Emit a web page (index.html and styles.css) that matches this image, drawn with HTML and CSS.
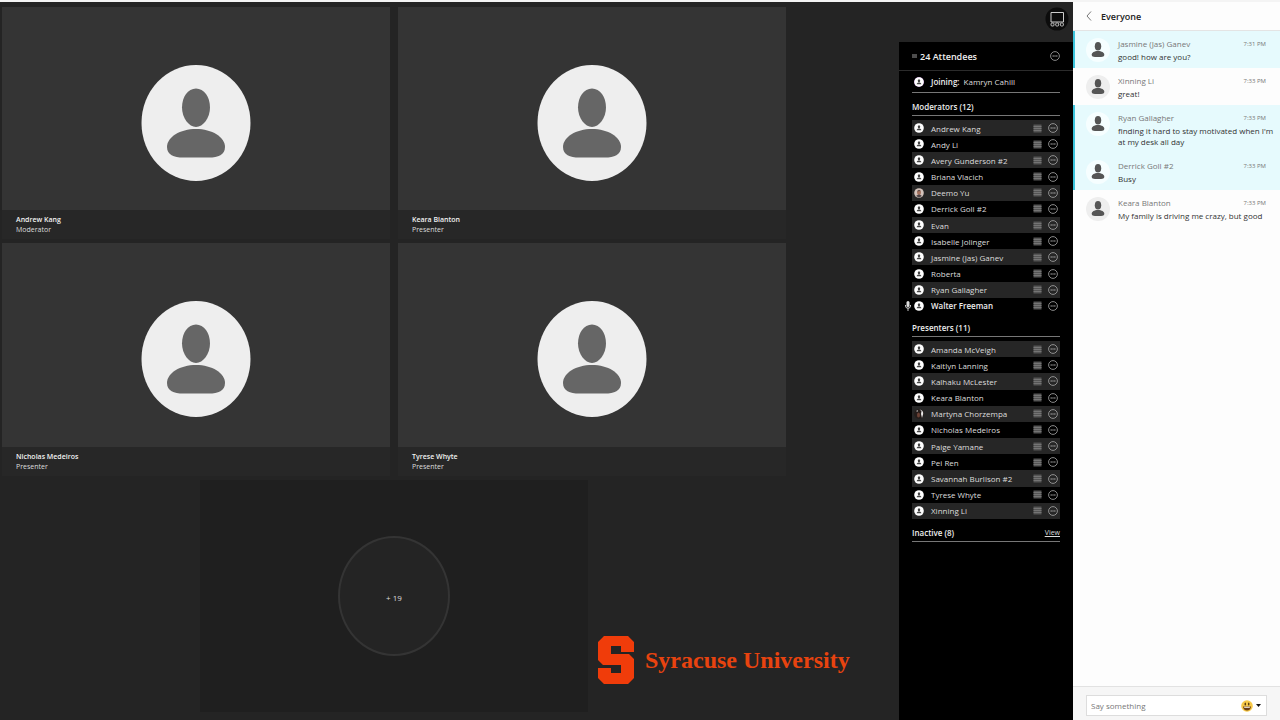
FILE: index.html
```html
<!DOCTYPE html>
<html lang="en">
<head>
<meta charset="utf-8">
<title>Class session</title>
<link rel="stylesheet" href="styles.css">
</head>
<body>
<svg class="sprite" aria-hidden="true">
  <symbol id="person-large" viewBox="0 0 110 116" preserveAspectRatio="none">
    <ellipse cx="55" cy="58" rx="54.5" ry="58" fill="#eeeeee"/>
    <path d="M55 23.500C63 23.500 69 32 69 42.500C69 53 62 62 55 62S41 53 41 42.500C41 32 47 23.500 55 23.500Z" fill="#666"/>
    <path d="M55 64C71 64 84 72 84 82C84 90 77 92.500 68 92.500H42C33 92.500 26 90 26 82C26 72 39 64 55 64Z" fill="#666"/>
  </symbol>
  <symbol id="person-small" viewBox="0 0 10 10">
    <circle cx="5" cy="5" r="4.800" fill="#fff"/>
    <ellipse cx="5" cy="3.700" rx="1.200" ry="1.500" fill="#444"/>
    <path d="M2.700 7.300C2.700 6 3.700 5.500 5 5.500S7.300 6 7.300 7.300Z" fill="#444"/>
  </symbol>
  <symbol id="person-chat" viewBox="0 0 24 24">
    <ellipse cx="12" cy="8.300" rx="3.200" ry="4.300" fill="#555"/>
    <path d="M12 13C15.800 13 18.300 14.700 18.300 16.800C18.300 18.400 17 19 15 19H9C7 19 5.700 18.400 5.700 16.800C5.700 14.700 8.200 13 12 13Z" fill="#555"/>
  </symbol>
  <symbol id="photo-a" viewBox="0 0 10 10">
    <circle cx="5" cy="5" r="4.800" fill="#d3c3bc"/>
    <ellipse cx="5" cy="4.400" rx="2" ry="2.600" fill="#a4705c"/>
    <path d="M3 3.500Q5 .500 7 3.500L6 3Z M2 8Q5 5 8 8L5 9.500Z" fill="#4a4144"/>
  </symbol>
  <symbol id="photo-b" viewBox="0 0 10 10">
    <circle cx="5" cy="5" r="4.800" fill="#241c1a"/>
    <path d="M5.500 .500Q9.500 1 9.200 5L8 9L7 5L7.500 2Z" fill="#e8e8e8"/>
    <path d="M2 2L4 1L3.500 3Z" fill="#bbb"/>
    <ellipse cx="4.500" cy="6" rx="1.500" ry="2.500" fill="#6a4034"/>
  </symbol>
  <symbol id="more" viewBox="0 0 10 10">
    <circle cx="5" cy="5" r="4.400" fill="none" stroke="currentColor" stroke-width=".8"/>
    <path d="M2.500 5H7.500" stroke="currentColor" stroke-width="1.200" stroke-dasharray="1.400 .4"/>
  </symbol>
  <symbol id="status" viewBox="0 0 9 9">
    <path d="M.500 .500H8.500V8.500H.500Z" fill="#555"/>
    <path d="M.500 2.500H8.500M.500 4.500H8.500M.500 6.500H8.500" stroke="#7c7c7c" stroke-width=".8"/>
  </symbol>
</svg>

<div class="app">
  <main class="stage">
    <section class="tile">
      <div class="media"><svg class="avatar"><use href="#person-large"/></svg></div>
      <div class="caption"><strong>Andrew Kang</strong><span>Moderator</span></div>
    </section>
    <section class="tile">
      <div class="media"><svg class="avatar"><use href="#person-large"/></svg></div>
      <div class="caption"><strong>Keara Blanton</strong><span>Presenter</span></div>
    </section>
    <section class="tile">
      <div class="media"><svg class="avatar"><use href="#person-large"/></svg></div>
      <div class="caption"><strong>Nicholas Medeiros</strong><span>Presenter</span></div>
    </section>
    <section class="tile">
      <div class="media"><svg class="avatar"><use href="#person-large"/></svg></div>
      <div class="caption"><strong>Tyrese Whyte</strong><span>Presenter</span></div>
    </section>
    <section class="tile tile-more"><button class="overflow" type="button">+ 19</button></section>
    <div class="brand">
      <svg class="brand-mark" viewBox="0 0 36 48" aria-hidden="true">
        <path d="M6 0H30L36 6V16H23V10H13V18H31L36 23V42L30 48H6L0 42V32H13V37H23V29H5L0 24V6Z" fill="#f03c0a"/>
      </svg>
      <span class="brand-name">Syracuse University</span>
    </div>
  </main>

  <aside class="side">
    <div class="toolbar">
      <button class="view-button" type="button" aria-label="Change view">
        <svg viewBox="0 0 24 24"><circle cx="12" cy="12" r="11.500" fill="#0c0c0c"/>
          <g fill="none" stroke="#ccc"><path d="M6 5.500H18.500V15H6Z" stroke-width="1"/><rect x="6" y="16" width="3" height="3" rx="1" stroke-width=".9"/><rect x="10.700" y="16" width="3" height="3" rx="1" stroke-width=".9"/><rect x="15.400" y="16" width="3" height="3" rx="1" stroke-width=".9"/></g></svg>
      </button>
    </div>
    <div class="attendees">
      <header class="attendees-head">
        <svg class="grip" viewBox="0 0 5 4"><path d="M0 1H5M0 3H5" stroke="#999" stroke-width="1"/></svg>
        <h2>24 Attendees</h2>
        <button class="icon-button" type="button" aria-label="Attendee options"><svg><use href="#more"/></svg></button>
      </header>
      <div class="attendees-body">
        <div class="joining"><svg class="face joining-face"><use href="#person-small"/></svg><strong>Joining:</strong><span>Kamryn Cahill</span></div>

        <h3>Moderators (12)</h3>
        <ul class="people moderators">
          <li><svg class="face"><use href="#person-small"/></svg><span>Andrew Kang</span><svg class="status"><use href="#status"/></svg><button class="icon-button" type="button" aria-label="Options"><svg><use href="#more"/></svg></button></li>
          <li><svg class="face"><use href="#person-small"/></svg><span>Andy Li</span><svg class="status"><use href="#status"/></svg><button class="icon-button" type="button" aria-label="Options"><svg><use href="#more"/></svg></button></li>
          <li><svg class="face"><use href="#person-small"/></svg><span>Avery Gunderson #2</span><svg class="status"><use href="#status"/></svg><button class="icon-button" type="button" aria-label="Options"><svg><use href="#more"/></svg></button></li>
          <li><svg class="face"><use href="#person-small"/></svg><span>Briana Vlacich</span><svg class="status"><use href="#status"/></svg><button class="icon-button" type="button" aria-label="Options"><svg><use href="#more"/></svg></button></li>
          <li><svg class="face"><use href="#photo-a"/></svg><span>Deemo Yu</span><svg class="status"><use href="#status"/></svg><button class="icon-button" type="button" aria-label="Options"><svg><use href="#more"/></svg></button></li>
          <li><svg class="face"><use href="#person-small"/></svg><span>Derrick Goll #2</span><svg class="status"><use href="#status"/></svg><button class="icon-button" type="button" aria-label="Options"><svg><use href="#more"/></svg></button></li>
          <li><svg class="face"><use href="#person-small"/></svg><span>Evan</span><svg class="status"><use href="#status"/></svg><button class="icon-button" type="button" aria-label="Options"><svg><use href="#more"/></svg></button></li>
          <li><svg class="face"><use href="#person-small"/></svg><span>Isabelle Jolinger</span><svg class="status"><use href="#status"/></svg><button class="icon-button" type="button" aria-label="Options"><svg><use href="#more"/></svg></button></li>
          <li><svg class="face"><use href="#person-small"/></svg><span>Jasmine (Jas) Ganev</span><svg class="status"><use href="#status"/></svg><button class="icon-button" type="button" aria-label="Options"><svg><use href="#more"/></svg></button></li>
          <li><svg class="face"><use href="#person-small"/></svg><span>Roberta</span><svg class="status"><use href="#status"/></svg><button class="icon-button" type="button" aria-label="Options"><svg><use href="#more"/></svg></button></li>
          <li><svg class="face"><use href="#person-small"/></svg><span>Ryan Gallagher</span><svg class="status"><use href="#status"/></svg><button class="icon-button" type="button" aria-label="Options"><svg><use href="#more"/></svg></button></li>
          <li class="speaking"><svg class="mic" viewBox="0 0 6 10"><rect x="1.500" y="0" width="3" height="6" rx="1.500" fill="#ddd"/><path d="M.500 4V5Q.500 7.200 3 7.200T5.500 5V4M3 7V10" stroke="#ddd" fill="none" stroke-width=".9"/></svg><svg class="face"><use href="#person-small"/></svg><span>Walter Freeman</span><svg class="status"><use href="#status"/></svg><button class="icon-button" type="button" aria-label="Options"><svg><use href="#more"/></svg></button></li>
        </ul>

        <h3>Presenters (11)</h3>
        <ul class="people presenters">
          <li><svg class="face"><use href="#person-small"/></svg><span>Amanda McVeigh</span><svg class="status"><use href="#status"/></svg><button class="icon-button" type="button" aria-label="Options"><svg><use href="#more"/></svg></button></li>
          <li><svg class="face"><use href="#person-small"/></svg><span>Kaitlyn Lanning</span><svg class="status"><use href="#status"/></svg><button class="icon-button" type="button" aria-label="Options"><svg><use href="#more"/></svg></button></li>
          <li><svg class="face"><use href="#person-small"/></svg><span>Kalhaku McLester</span><svg class="status"><use href="#status"/></svg><button class="icon-button" type="button" aria-label="Options"><svg><use href="#more"/></svg></button></li>
          <li><svg class="face"><use href="#person-small"/></svg><span>Keara Blanton</span><svg class="status"><use href="#status"/></svg><button class="icon-button" type="button" aria-label="Options"><svg><use href="#more"/></svg></button></li>
          <li><svg class="face"><use href="#photo-b"/></svg><span>Martyna Chorzempa</span><svg class="status"><use href="#status"/></svg><button class="icon-button" type="button" aria-label="Options"><svg><use href="#more"/></svg></button></li>
          <li><svg class="face"><use href="#person-small"/></svg><span>Nicholas Medeiros</span><svg class="status"><use href="#status"/></svg><button class="icon-button" type="button" aria-label="Options"><svg><use href="#more"/></svg></button></li>
          <li><svg class="face"><use href="#person-small"/></svg><span>Paige Yamane</span><svg class="status"><use href="#status"/></svg><button class="icon-button" type="button" aria-label="Options"><svg><use href="#more"/></svg></button></li>
          <li><svg class="face"><use href="#person-small"/></svg><span>Pei Ren</span><svg class="status"><use href="#status"/></svg><button class="icon-button" type="button" aria-label="Options"><svg><use href="#more"/></svg></button></li>
          <li><svg class="face"><use href="#person-small"/></svg><span>Savannah Burlison #2</span><svg class="status"><use href="#status"/></svg><button class="icon-button" type="button" aria-label="Options"><svg><use href="#more"/></svg></button></li>
          <li><svg class="face"><use href="#person-small"/></svg><span>Tyrese Whyte</span><svg class="status"><use href="#status"/></svg><button class="icon-button" type="button" aria-label="Options"><svg><use href="#more"/></svg></button></li>
          <li><svg class="face"><use href="#person-small"/></svg><span>Xinning Li</span><svg class="status"><use href="#status"/></svg><button class="icon-button" type="button" aria-label="Options"><svg><use href="#more"/></svg></button></li>
        </ul>

        <div class="inactive"><h3>Inactive (8)</h3><a href="#">View</a></div>
      </div>
    </div>
  </aside>

  <section class="chat">
    <header class="chat-head">
      <button class="back" type="button" aria-label="Back"><svg viewBox="0 0 6 10"><path d="M5 .500L1 5L5 9.500" fill="none" stroke="#777"/></svg></button>
      <h2>Everyone</h2>
    </header>
    <div class="messages">
      <article class="message fresh"><svg class="chat-face"><use href="#person-chat"/></svg><div class="text"><div class="meta"><span>Jasmine (Jas) Ganev</span><time>7:31 PM</time></div><p>good! how are you?</p></div></article>
      <article class="message"><svg class="chat-face"><use href="#person-chat"/></svg><div class="text"><div class="meta"><span>Xinning Li</span><time>7:33 PM</time></div><p>great!</p></div></article>
      <article class="message fresh"><svg class="chat-face"><use href="#person-chat"/></svg><div class="text"><div class="meta"><span>Ryan Gallagher</span><time>7:33 PM</time></div><p>finding it hard to stay motivated when I'm at my desk all day</p></div></article>
      <article class="message fresh"><svg class="chat-face"><use href="#person-chat"/></svg><div class="text"><div class="meta"><span>Derrick Goll #2</span><time>7:33 PM</time></div><p>Busy</p></div></article>
      <article class="message"><svg class="chat-face"><use href="#person-chat"/></svg><div class="text"><div class="meta"><span>Keara Blanton</span><time>7:33 PM</time></div><p>My family is driving me crazy, but good</p></div></article>
    </div>
    <form class="composer">
      <div class="field">
        <input type="text" placeholder="Say something" aria-label="Say something">
        <button class="emoji" type="button" aria-label="Insert emoji">
          <svg class="smile" viewBox="0 0 12 12"><circle cx="6" cy="6" r="5.800" fill="#f7c948"/><ellipse cx="4.300" cy="4" rx=".8" ry="1.500" fill="#5a3c14"/><ellipse cx="7.700" cy="4" rx=".8" ry="1.500" fill="#5a3c14"/><path d="M2 6.500H10Q9.500 10.500 6 10.500T2 6.500Z" fill="#6b3d12"/><path d="M3 6.800H9L8.700 7.800H3.300Z" fill="#fff"/></svg>
          <svg class="caret" viewBox="0 0 5 3"><path d="M0 0H5L2.500 3Z" fill="#111"/></svg>
        </button>
      </div>
    </form>
  </section>
</div>
</body>
</html>
```
FILE: styles.css
```css
* { box-sizing: border-box; }

body {
  margin: 0;
  font-family: "Open Sans", "Noto Sans", sans-serif;
  font-size: 8px;
  line-height: 11px;
  color: #ddd;
  background: #242424;
}

h2, h3, p, ul { margin: 0; padding: 0; }
h2, h3, strong { font-weight: 600; }
button { margin: 0; padding: 0; border: 0; background: none; color: inherit; font: inherit; }
svg { display: block; flex: none; }
.sprite { position: absolute; width: 0; height: 0; }

.app {
  display: flex;
  min-height: 100vh;
  border-top: 2px solid #f4f4f4;
}

/* Video stage */
.stage {
  flex: 1;
  display: grid;
  grid-template-columns: repeat(4, 190fr) 105fr;
  grid-template-rows: repeat(3, 1fr);
  gap: 4px 8px;
  padding: 5px 0 8px 2px;
}
.tile { grid-column: span 2; display: flex; flex-direction: column; background: #272727; }
.tile:nth-child(odd) { grid-column: 1 / span 2; }
.tile:nth-child(even) { grid-column: 3 / span 2; }
.media {
  flex: 1;
  display: flex;
  align-items: center;
  justify-content: center;
  padding-top: 29px;
  background: #343434;
}
.avatar { width: 110px; height: 116px; }
.caption {
  display: flex;
  flex-direction: column;
  padding: 5px 14px 4px;
  font-size: 7px;
  line-height: 10px;
}
.caption strong { color: #f2f2f2; }
.tile.tile-more {
  grid-column: 2 / span 2;
  align-items: center;
  justify-content: center;
  background: #1f1f1f;
}
.overflow {
  width: 112px;
  height: 120px;
  padding-top: 4px;
  border: 2px solid #343434;
  border-radius: 50%;
  background: #242424;
}
.brand {
  grid-column: 4 / span 2;
  grid-row: 3;
  align-self: end;
  display: flex;
  align-items: center;
  gap: 11px;
  padding: 0 0 28px 2px;
  color: #e8430f;
}
.brand-mark { width: 36px; height: 48px; }
.brand-name {
  font: bold 24px/32px "Liberation Serif", "Times New Roman", serif;
  white-space: nowrap;
}

/* Attendee list */
.side { flex: none; width: 174px; display: flex; flex-direction: column; }
.toolbar { display: flex; justify-content: flex-end; padding: 5px 4px 11px; }
.view-button, .view-button svg { width: 24px; height: 24px; }
.attendees { flex: 1; background: #000; }
.attendees-head {
  display: flex;
  align-items: center;
  gap: 3px;
  height: 29px;
  padding: 0 13px;
  border-bottom: 1px solid #2b2b2b;
}
.attendees-head h2 { flex: 1; font-size: 9px; color: #eee; }
.grip { width: 5px; height: 4px; }
.icon-button, .icon-button svg { width: 10px; height: 10px; color: #aaa; }
.attendees-body { padding: 0 13px; }
.face { width: 10px; height: 10px; }
.joining {
  display: flex;
  align-items: center;
  gap: 4px;
  height: 22px;
  padding-left: 2px;
  border-bottom: 1px solid #777;
}
.joining strong { color: #eee; }
.joining-face { margin-right: 3px; border-radius: 50%; background: #a678b8; }
.attendees h3 { font-size: 8px; color: #eee; }
.attendees-body > h3 {
  margin-bottom: 4px;
  padding: 8px 0 3px;
  border-bottom: 1px solid #777;
}
.people { display: grid; grid-auto-rows: 1fr; list-style: none; }
.moderators { min-height: 194px; }
.presenters { min-height: 178px; }
.people li {
  position: relative;
  display: flex;
  align-items: center;
  gap: 7px;
  padding: 0 2px;
}
.people li:nth-child(odd) { background: #262626; }
.people span { flex: 1; white-space: nowrap; }
.status { width: 9px; height: 9px; }
.people .icon-button { margin-left: -1px; }
.mic { position: absolute; left: -7px; width: 6px; height: 10px; }
.people .speaking { font-weight: 600; color: #eee; }
.inactive {
  display: flex;
  justify-content: space-between;
  padding: 8px 0 3px;
  border-bottom: 1px solid #777;
}
.inactive a { font-size: 7px; color: #ddd; }

/* Chat */
.chat {
  flex: none;
  width: 207px;
  display: flex;
  flex-direction: column;
  color: #333;
  background: #fdfdfd;
}
.chat-head {
  display: flex;
  align-items: center;
  gap: 9px;
  height: 29px;
  padding-left: 13px;
  border-bottom: 1px solid #e4e4e4;
}
.chat-head h2 { font-size: 9px; color: #222; }
.back svg { width: 6px; height: 10px; }
.messages { flex: 1; }
.message {
  display: flex;
  gap: 8px;
  padding: 7px 4px 6px 11px;
  border-left: 2px solid transparent;
}
.message.fresh { border-color: #3cc4dc; background: #e6fafd; }
.chat-face { width: 24px; height: 24px; border-radius: 50%; background: #eee; }
.fresh .chat-face { background: #f6feff; }
.text { flex: 1; }
.meta {
  display: flex;
  justify-content: space-between;
  margin-bottom: 2px;
  padding-right: 10px;
  color: #777;
}
.meta time { font-size: 6px; line-height: 12px; height: 11px; }
.composer { padding: 8px 13px 4px; border-top: 1px solid #e2e2e2; background: #f6f6f6; }
.field { display: flex; align-items: center; height: 21px; border: 1px solid #ddd; background: #fff; }
.field input {
  flex: 1;
  min-width: 0;
  padding: 0 4px;
  border: 0;
  background: none;
  font: inherit;
  color: #333;
}
.field input::placeholder { color: #777; }
.emoji { display: flex; align-items: center; gap: 3px; padding-right: 5px; }
.smile { width: 12px; height: 12px; }
.caret { width: 5px; height: 3px; }
```
